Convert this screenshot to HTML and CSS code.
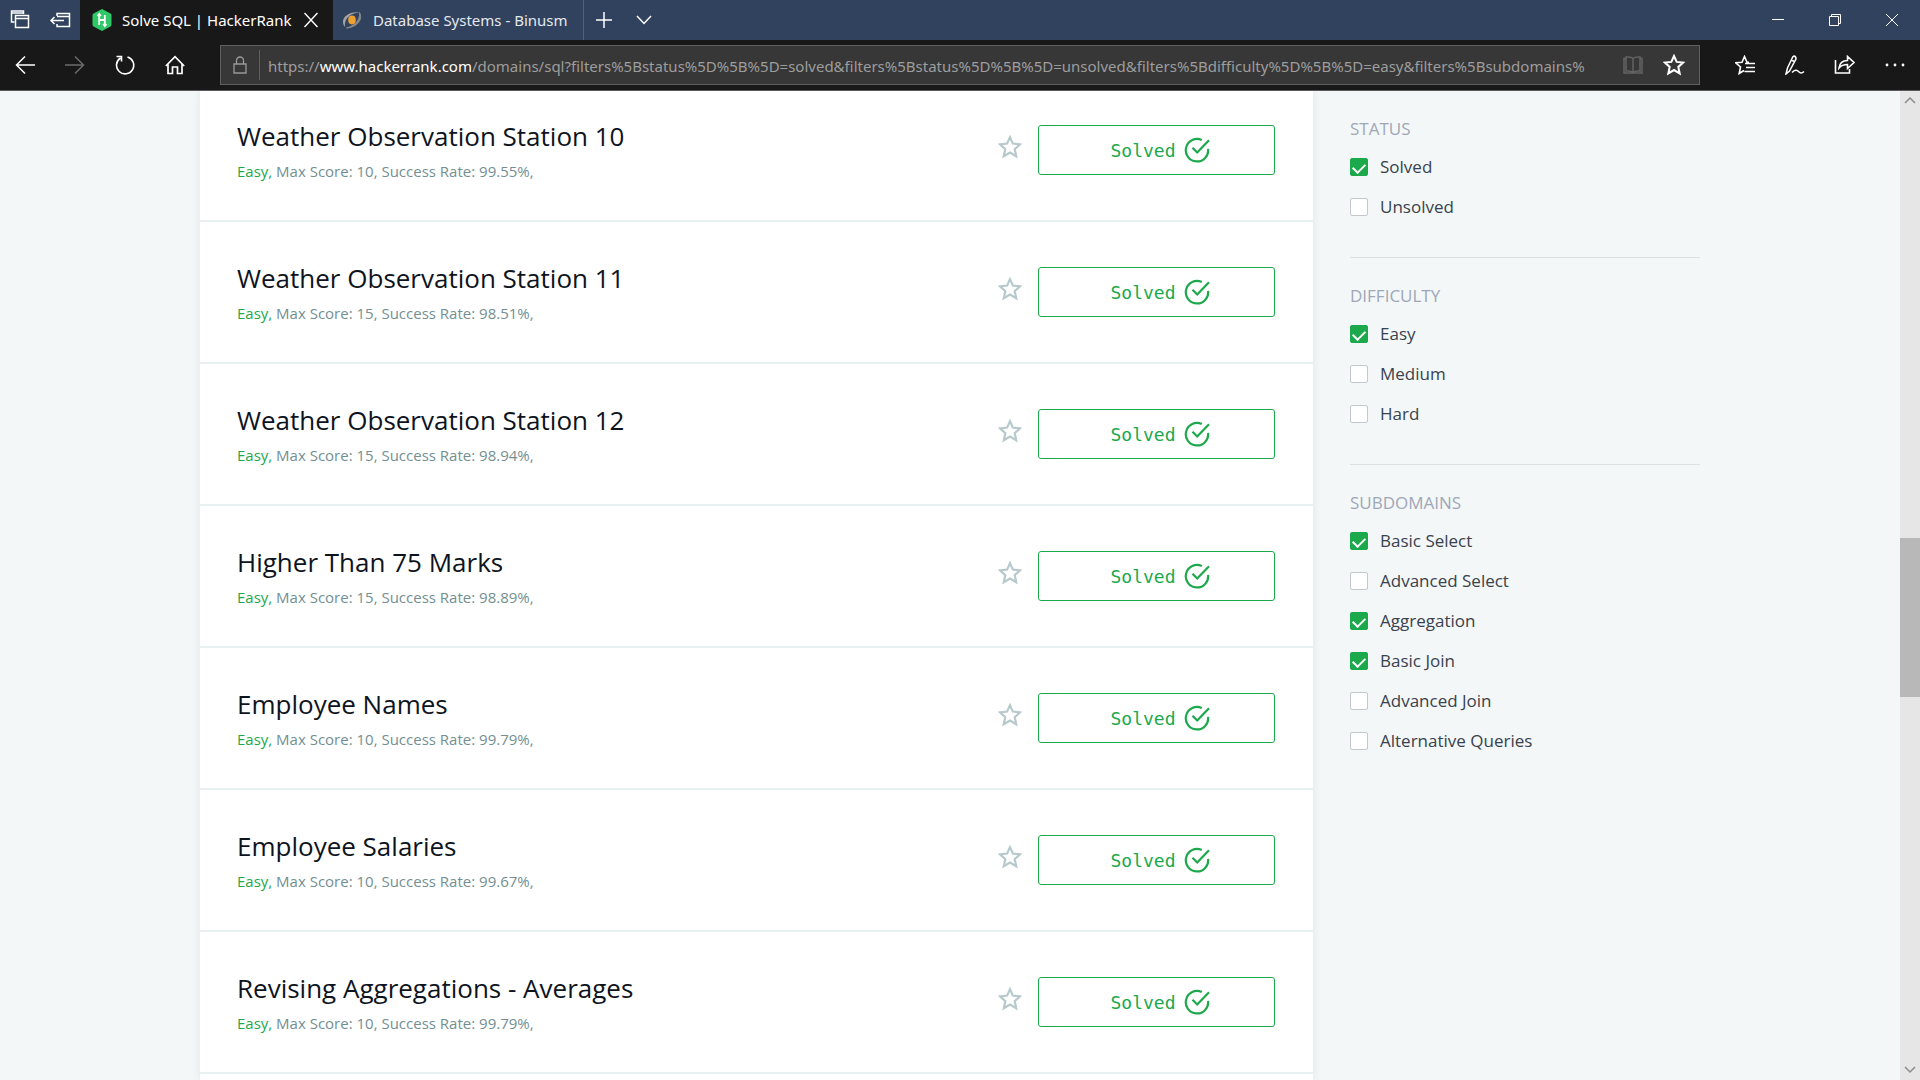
FILE: index.html
```html
<!DOCTYPE html>
<html lang="en">
<head>
<meta charset="utf-8">
<title>Solve SQL | HackerRank</title>
<link rel="stylesheet" href="styles.css">
</head>
<body>
<svg class="defs" aria-hidden="true">
  <symbol id="star" viewBox="0 0 24 24"><path d="M12 2.2l2.9 6.4 7 .8-5.2 4.7 1.5 7.1-6.2-3.700-6.200 3.700 1.500-7.100L2.100 9.400l7-.8z" fill="none" stroke="currentColor" stroke-width="2.200"/></symbol>
  <symbol id="check" viewBox="0 0 26 26"><path d="M17.800 3.100A11.200 11.200 0 1 0 24.100 11.800" fill="none" stroke="currentColor" stroke-width="2.200"/><path d="M8.500 10.800l4.700 4.700L25 3.200" fill="none" stroke="currentColor" stroke-width="2.200"/></symbol>
</svg>

<header class="browser">
  <div class="tabs">
    <button class="tool" aria-label="Tabs set aside"><svg width="20" height="24" viewBox="0 0 20 24" fill="none" stroke="currentColor" stroke-width="1.500"><path d="M4.500 14H1.500V3h12v3M1.500 5h12"/><path d="M5.500 7.500h13v12h-13zM5.500 10.500h13"/></svg></button>
    <button class="tool" aria-label="Set tabs aside"><svg width="22" height="22" viewBox="0 0 22 22" fill="none" stroke="currentColor" stroke-width="1.500"><path d="M8 7V4.500h12.500v13H8V15M8 7.500h12.500"/><path d="M15 11.500H2M5.500 8L2 11.500 5.500 15"/></svg></button>
    <div class="tab active">
      <svg width="20" height="22" viewBox="0 0 20 22"><path d="M10 0l8.500 4.500q1 .5 1 2v9q0 1.500-1 2L10 22l-8.500-4.500q-1-.5-1-2v-9q0-1.500 1-2z" fill="#2ec866"/><path d="M7.200 6v10M12.800 6v10M7.200 11h5.600M5.500 7l1.700-2 1.700 2M11.100 15l1.700 2 1.700-2" fill="none" stroke="#fff" stroke-width="1.800"/></svg>
      <span class="tab-name">Solve SQL | HackerRank</span>
      <button class="close" aria-label="Close tab"><svg width="14" height="16" viewBox="0 0 14 16" stroke="currentColor" stroke-width="1.400"><path d="M.5 1l13 14M13.500 1L.5 15"/></svg></button>
    </div>
    <div class="tab">
      <svg width="22" height="22" viewBox="0 0 22 22" fill="none"><path d="M4 18C-2 11 6 2 18 3.500 9 4 3 10 4 18z" fill="#a3a3a3"/><path d="M18.500 3.500c4 7-3 15-13 15.500 8-2 14-8 13-15.500z" fill="#8a8a8a" stroke="#8a8a8a"/><ellipse cx="11" cy="11" rx="3.800" ry="4.400" fill="#f0a030"/></svg>
      <span class="tab-name">Database Systems - Binusm</span>
    </div>
    <button class="tool" aria-label="New tab"><svg width="18" height="18" viewBox="0 0 18 18" stroke="currentColor" stroke-width="1.500"><path d="M9 1v16M1 9h16"/></svg></button>
    <button class="tool" aria-label="Show tab previews"><svg width="16" height="10" viewBox="0 0 16 10" fill="none" stroke="currentColor" stroke-width="1.500"><path d="M1 1l7 7.500L15 1"/></svg></button>
    <div class="window">
      <button aria-label="Minimize"><svg width="12" height="12" viewBox="0 0 12 12" stroke="currentColor"><path d="M0 5.500h12"/></svg></button>
      <button aria-label="Restore"><svg width="12" height="12" viewBox="0 0 12 12" fill="none" stroke="currentColor"><path d="M.5 2.500h9v9h-9zM2.500 2.500v-2h9v9h-2"/></svg></button>
      <button aria-label="Close"><svg width="12" height="12" viewBox="0 0 12 12" stroke="currentColor"><path d="M0 0l12 12M12 0L0 12"/></svg></button>
    </div>
  </div>

  <div class="toolbar">
    <nav class="nav">
      <button aria-label="Back"><svg width="20" height="20" viewBox="0 0 20 20" fill="none" stroke="currentColor" stroke-width="1.500"><path d="M20 10H1.500M10 1.500L1.500 10l8.500 8.500"/></svg></button>
      <button aria-label="Forward" class="off"><svg width="20" height="20" viewBox="0 0 20 20" fill="none" stroke="currentColor" stroke-width="1.500"><path d="M0 10h18.500M10 1.500l8.500 8.500-8.500 8.500"/></svg></button>
      <button aria-label="Refresh"><svg width="20" height="20" viewBox="0 0 20 20" fill="none" stroke="currentColor" stroke-width="1.600"><path d="M12.500 2A8.600 8.600 0 1 1 5.500 3M1.500 1.500h5v5"/></svg></button>
      <button aria-label="Home"><svg width="20" height="20" viewBox="0 0 20 20" fill="none" stroke="currentColor" stroke-width="1.700"><path d="M.8 11L10 1.700l9.200 9.300M3 9v9.500h4.500V12h5v6.500H17V9"/></svg></button>
    </nav>
    <div class="address">
      <svg class="lock" width="14" height="18" viewBox="0 0 14 18" fill="none" stroke="currentColor" stroke-width="1.300"><path d="M1 8h12v9H1zM3.500 8V4.500a3.500 3.500 0 0 1 7 0V8"/></svg>
      <div class="url">https://<b>www.hackerrank.com</b>/domains/sql?filters%5Bstatus%5D%5B%5D=solved&amp;filters%5Bstatus%5D%5B%5D=unsolved&amp;filters%5Bdifficulty%5D%5B%5D=easy&amp;filters%5Bsubdomains%</div>
      <button class="book" aria-label="Reading view"><svg width="20" height="20" viewBox="0 0 20 20" fill="none" stroke="currentColor" stroke-width="1.500"><path d="M10 3.500Q8 1.500 3 2v14q5-.5 7 1.500 2-2 7-1.500V2q-5-.5-7 1.500v14M3 3.500H1v14.500h18V3.500h-2"/></svg></button>
      <button aria-label="Add to favorites"><svg width="22" height="22"><use href="#star"/></svg></button>
    </div>
    <div class="actions">
      <button aria-label="Favorites"><svg width="20" height="20" viewBox="0 0 20 20" fill="none" stroke="currentColor" stroke-width="1.600"><path d="M14 7.200h-2L9.500 1.500 7 7.200l-6.200.6 4.700 4.200-1.300 6.500L9 15.500M10 8.500h10M11 12.500h9M9.500 16.500H20"/></svg></button>
      <button aria-label="Add notes"><svg width="20" height="20" viewBox="0 0 20 20" fill="none" stroke="currentColor" stroke-width="1.500"><path d="M1 19l1.500-6L8 1.500q1.500-1 2.500.5t0 3L4.500 16zM6.500 5l3.500 2M7 17.500q4-4 6.500-1t5.500 0"/></svg></button>
      <button aria-label="Share"><svg width="22" height="20" viewBox="0 0 22 20" fill="none" stroke="currentColor" stroke-width="1.600"><path d="M1.500 5v13h14v-4M5 13q1-7.500 8.500-7.500v-4L20 7.500l-6.500 6V9.500Q8 9.500 5 13z"/></svg></button>
      <button aria-label="Settings and more"><svg width="20" height="4" viewBox="0 0 20 4" fill="currentColor"><circle cx="2" cy="2" r="1.400"/><circle cx="10" cy="2" r="1.400"/><circle cx="18" cy="2" r="1.400"/></svg></button>
    </div>
  </div>
</header>

<div class="view">
  <div class="page">
    <main class="list">
      <article class="row"><div class="info"><h2>Weather Observation Station 10</h2><p><span>Easy,</span> Max Score: 10, Success Rate: 99.55%,</p></div><button class="fav" aria-label="Bookmark"><svg width="24" height="24"><use href="#star"/></svg></button><button class="solved">Solved <svg width="26" height="26"><use href="#check"/></svg></button></article>
      <article class="row"><div class="info"><h2>Weather Observation Station 11</h2><p><span>Easy,</span> Max Score: 15, Success Rate: 98.51%,</p></div><button class="fav" aria-label="Bookmark"><svg width="24" height="24"><use href="#star"/></svg></button><button class="solved">Solved <svg width="26" height="26"><use href="#check"/></svg></button></article>
      <article class="row"><div class="info"><h2>Weather Observation Station 12</h2><p><span>Easy,</span> Max Score: 15, Success Rate: 98.94%,</p></div><button class="fav" aria-label="Bookmark"><svg width="24" height="24"><use href="#star"/></svg></button><button class="solved">Solved <svg width="26" height="26"><use href="#check"/></svg></button></article>
      <article class="row"><div class="info"><h2>Higher Than 75 Marks</h2><p><span>Easy,</span> Max Score: 15, Success Rate: 98.89%,</p></div><button class="fav" aria-label="Bookmark"><svg width="24" height="24"><use href="#star"/></svg></button><button class="solved">Solved <svg width="26" height="26"><use href="#check"/></svg></button></article>
      <article class="row"><div class="info"><h2>Employee Names</h2><p><span>Easy,</span> Max Score: 10, Success Rate: 99.79%,</p></div><button class="fav" aria-label="Bookmark"><svg width="24" height="24"><use href="#star"/></svg></button><button class="solved">Solved <svg width="26" height="26"><use href="#check"/></svg></button></article>
      <article class="row"><div class="info"><h2>Employee Salaries</h2><p><span>Easy,</span> Max Score: 10, Success Rate: 99.67%,</p></div><button class="fav" aria-label="Bookmark"><svg width="24" height="24"><use href="#star"/></svg></button><button class="solved">Solved <svg width="26" height="26"><use href="#check"/></svg></button></article>
      <article class="row"><div class="info"><h2>Revising Aggregations - Averages</h2><p><span>Easy,</span> Max Score: 10, Success Rate: 99.79%,</p></div><button class="fav" aria-label="Bookmark"><svg width="24" height="24"><use href="#star"/></svg></button><button class="solved">Solved <svg width="26" height="26"><use href="#check"/></svg></button></article>
    </main>
    <aside class="filters">
      <fieldset>
        <legend>STATUS</legend>
        <label><input type="checkbox" checked>Solved</label>
        <label><input type="checkbox">Unsolved</label>
      </fieldset>
      <fieldset>
        <legend>DIFFICULTY</legend>
        <label><input type="checkbox" checked>Easy</label>
        <label><input type="checkbox">Medium</label>
        <label><input type="checkbox">Hard</label>
      </fieldset>
      <fieldset>
        <legend>SUBDOMAINS</legend>
        <label><input type="checkbox" checked>Basic Select</label>
        <label><input type="checkbox">Advanced Select</label>
        <label><input type="checkbox" checked>Aggregation</label>
        <label><input type="checkbox" checked>Basic Join</label>
        <label><input type="checkbox">Advanced Join</label>
        <label><input type="checkbox">Alternative Queries</label>
      </fieldset>
    </aside>
  </div>
  <div class="scrollbar" aria-hidden="true">
    <svg width="20" height="20" viewBox="0 0 20 20" fill="none" stroke="#8c8c8c" stroke-width="1.500"><path d="M5 12l5-5 5 5"/></svg>
    <div class="before"></div><div class="thumb"></div><div class="after"></div>
    <svg width="20" height="20" viewBox="0 0 20 20" fill="none" stroke="#8c8c8c" stroke-width="1.500"><path d="M5 7l5 5 5-5"/></svg>
  </div>
</div>
</body>
</html>
```

FILE: styles.css
```css
* { box-sizing: border-box; }

body {
  margin: 0;
  height: 100vh;
  display: flex;
  flex-direction: column;
  overflow: hidden;
  font-family: "Open Sans", "Noto Sans", sans-serif;
  background: #f3f7f7;
}

.defs { display: none; }
svg { display: block; flex: none; }

button {
  display: flex;
  align-items: center;
  justify-content: center;
  padding: 0;
  border: 0;
  background: none;
  color: inherit;
  font: inherit;
}

/* Browser chrome */
.browser {
  flex: none;
  color: #fff;
  font-family: "Noto Sans", "Open Sans", sans-serif;
  font-size: 15px;
}

.tabs {
  display: flex;
  height: 40px;
  background: #30425d;
}
.tool { width: 40px; }
.tab {
  display: flex;
  align-items: center;
  gap: 10px;
  width: 251px;
  padding: 0 12px 0 8px;
  border-right: 1px solid #50617b;
  color: #e4e8ee;
}
.tab.active {
  width: 253px;
  padding: 0 14px 0 12px;
  border: 0;
  background: #181818;
  color: #fff;
}
.tab-name { flex: 1; white-space: nowrap; overflow: hidden; }
.close { width: 16px; height: 24px; }
.window { display: flex; margin-left: auto; }
.window button { width: 57px; }

.toolbar {
  display: flex;
  align-items: center;
  height: 51px;
  background: #181818;
  border-bottom: 1px solid #5c595b;
}
.nav { display: flex; width: 220px; }
.nav button { width: 50px; height: 40px; }
.nav .off { color: #6b6b6b; }
.address {
  flex: 1;
  min-width: 0;
  display: flex;
  align-items: center;
  height: 40px;
  padding-right: 5px;
  border: 1px solid #5f5f5f;
  background: #373737;
}
.address button { width: 41px; height: 38px; }
.address .book { color: #636363; }
.lock { margin: 0 12px; color: #999; }
.url {
  flex: 1;
  min-width: 0;
  height: 30px;
  padding-left: 8px;
  border-left: 1px solid #5f5f5f;
  line-height: 32px;
  color: #9d9d9d;
  white-space: nowrap;
  overflow: hidden;
}
.url b { font-weight: 400; color: #fff; }
.actions { display: flex; padding-left: 20px; }
.actions button { width: 50px; height: 40px; }

/* Page */
.view { flex: 1; min-height: 0; display: flex; overflow: hidden; }
.page {
  flex: 1;
  display: flex;
  gap: 37px;
  max-width: 1500px;
  margin: 0 auto;
}
.list {
  flex: 1;
  background: #fff;
  box-shadow: 0 0 8px #dbe7e8;
}
.row {
  display: flex;
  align-items: center;
  padding: 39px 38px 39px 37px;
  border-bottom: 2px solid #e9f0f1;
}
.row:first-child { padding-top: 28px; }
.info { flex: 1; }
.info h2 {
  margin: 0 0 8px;
  font-size: 26px;
  line-height: 34px;
  font-weight: 400;
  color: #0e141e;
}
.info p {
  margin: 0;
  font-size: 15px;
  line-height: 20px;
  color: #738f93;
}
.info span { color: #1ba94c; }
.fav { margin: 0 16px 6px; color: #b7c9cc; }
.solved {
  gap: 8px;
  width: 237px;
  height: 50px;
  padding-left: 7px;
  border: 1px solid #1ba94c;
  border-radius: 3px;
  background: #fff;
  color: #1ba94c;
  font-family: "DejaVu Sans Mono", monospace;
  font-size: 18px;
}

.filters {
  width: 350px;
  padding-top: 26px;
  font-size: 17px;
  line-height: 24px;
}
fieldset {
  margin: 0;
  padding: 0 0 30px;
  border: 0;
}
fieldset + fieldset {
  padding-top: 26px;
  border-top: 1px solid #dce2e4;
}
legend {
  float: left;
  width: 100%;
  margin-bottom: 6px;
  padding: 0;
  color: #9fa7b7;
}
label {
  clear: both;
  display: flex;
  align-items: center;
  gap: 12px;
  height: 40px;
  color: #39424e;
}
input {
  appearance: none;
  width: 18px;
  height: 18px;
  margin: 0;
  border: 1px solid #c2c7d0;
  border-radius: 2px;
  background: #fff;
}
input:checked {
  display: flex;
  justify-content: center;
  border-color: #1ba94c;
  background: #1ba94c;
}
input:checked::before {
  content: "";
  width: 10px;
  height: 6px;
  margin-top: 4px;
  border: solid #fff;
  border-width: 0 0 2px 2px;
  transform: rotate(-45deg);
}

.scrollbar {
  width: 20px;
  display: flex;
  flex-direction: column;
  background: #e6e6e6;
}
.before { flex: 427; }
.thumb { flex: 159; background: #b8b8b8; }
.after { flex: 363; }
```
